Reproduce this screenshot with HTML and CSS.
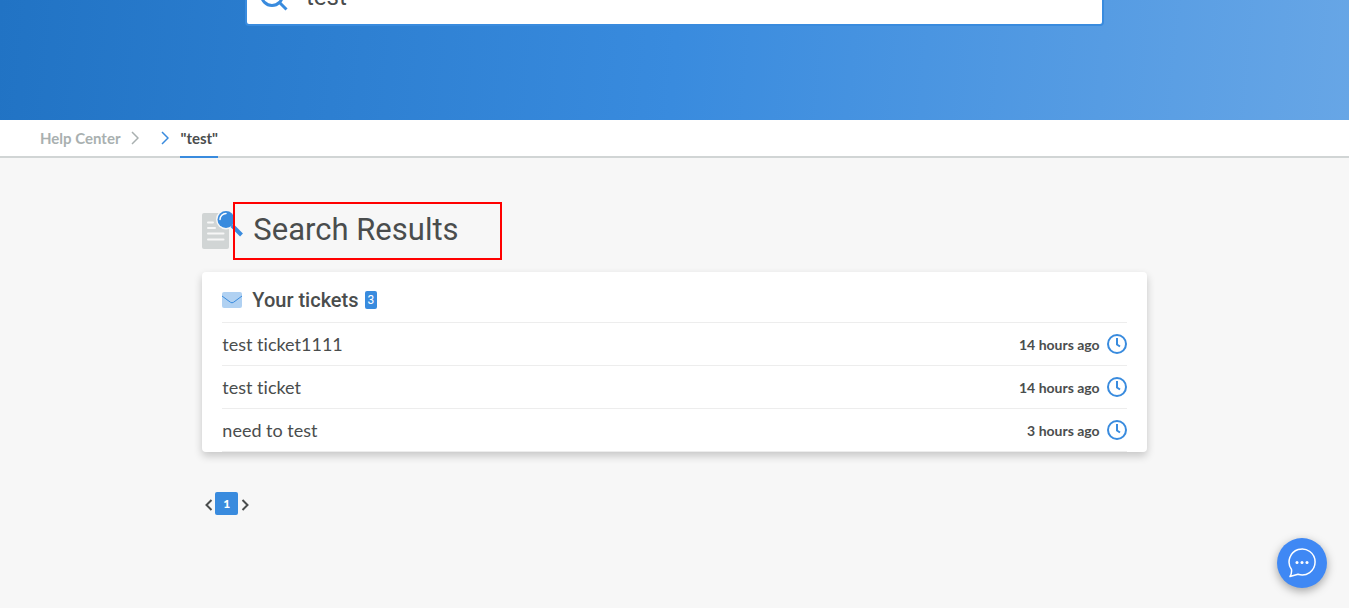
FILE: index.html
```html
<!DOCTYPE html>
<html lang="en">
<head>
<meta charset="utf-8">
<meta name="viewport" content="width=device-width, initial-scale=1">
<title>Search Results - Help Center</title>
<link rel="stylesheet" href="styles.css">
</head>
<body>
<header class="hero">
  <form class="search" role="search">
    <svg class="search-icon" viewBox="0 0 28 28" aria-hidden="true"><circle cx="12" cy="12" r="10.5"/><path d="M19.5 19.5 26.5 26.5"/></svg>
    <input class="search-input" type="text" value="test" aria-label="Search">
  </form>
</header>
<nav class="crumbs" aria-label="Breadcrumb">
  <a class="crumb" href="#">Help Center</a>
  <svg class="chevron" viewBox="0 0 8 14" aria-hidden="true"><path d="M1 1l6 6-6 6"/></svg>
  <svg class="chevron chevron-active" viewBox="0 0 8 14" aria-hidden="true"><path d="M1 1l6 6-6 6"/></svg>
  <a class="crumb crumb-current" href="#" aria-current="page">"test"</a>
</nav>
<main class="content">
  <div class="heading">
    <svg class="heading-icon" viewBox="0 0 42 40" aria-hidden="true">
      <rect x="0" y="2" width="27" height="36" rx="2" fill="#d1d5d5"/>
      <path d="M6 11.500h5M6 17h7M6 22.500h15.500M6 28.500h15.500" stroke="#f7f7f7" stroke-width="2" stroke-linecap="round"/>
      <circle cx="24" cy="8.500" r="10" fill="#f7f7f7"/>
      <path d="M30 14.500 39.500 24" stroke="#398bde" stroke-width="4"/>
      <circle cx="24" cy="8.500" r="8.500" fill="#398bde"/>
      <path d="M18 8.500a6 6 0 0 1 6-6" fill="none" stroke="#fff" stroke-width="1.500" stroke-linecap="round"/>
    </svg>
    <h1 class="title">Search Results</h1>
  </div>
  <section class="card">
    <h2 class="card-title">
      <svg class="mail" viewBox="0 0 20 16" aria-hidden="true"><rect width="20" height="16" rx="2" fill="#b0d1f2"/><path d="M0 4l8.500 6.300q1.500 1 3 0L20 4" fill="none" stroke="#398bde"/></svg>
      <span>Your tickets</span>
      <span class="count">3</span>
    </h2>
    <ul class="tickets">
      <li class="ticket"><a class="ticket-link" href="#">test ticket1111</a><span class="time">14 hours ago</span><svg class="clock" viewBox="0 0 20 20" aria-hidden="true"><circle cx="10" cy="10" r="9"/><path d="M10 4v6.500l3 2"/></svg></li>
      <li class="ticket"><a class="ticket-link" href="#">test ticket</a><span class="time">14 hours ago</span><svg class="clock" viewBox="0 0 20 20" aria-hidden="true"><circle cx="10" cy="10" r="9"/><path d="M10 4v6.500l3 2"/></svg></li>
      <li class="ticket"><a class="ticket-link" href="#">need to test</a><span class="time">3 hours ago</span><svg class="clock" viewBox="0 0 20 20" aria-hidden="true"><circle cx="10" cy="10" r="9"/><path d="M10 4v6.500l3 2"/></svg></li>
    </ul>
  </section>
  <nav class="pager" aria-label="Pagination">
    <a class="pager-arrow" href="#" aria-label="Previous"><svg class="arrow" viewBox="0 0 8 12" aria-hidden="true"><path d="M6.500 1l-5 5 5 5"/></svg></a>
    <a class="page" href="#" aria-current="page">1</a>
    <a class="pager-arrow" href="#" aria-label="Next"><svg class="arrow" viewBox="0 0 8 12" aria-hidden="true"><path d="M1.500 1l5 5-5 5"/></svg></a>
  </nav>
</main>
<button class="chat" type="button" aria-label="Open chat">
  <svg class="chat-icon" viewBox="0 0 28 30" aria-hidden="true"><path d="M3.500 21.500A13 13 0 1 1 10 26.300L2 28.500Q4 25.500 3.500 21.500Z" fill="none" stroke="#fff" stroke-width="1.500" stroke-linejoin="round"/><circle cx="9" cy="14.500" r="1.500" fill="#fff"/><circle cx="14" cy="14.500" r="1.500" fill="#fff"/><circle cx="19" cy="14.500" r="1.500" fill="#fff"/></svg>
</button>
</body>
</html>
```
FILE: styles.css
```css
* { box-sizing: border-box; }

body {
  margin: 0;
  background: #f7f7f7;
  color: #4a4d4d;
  font-family: Lato, "Liberation Sans", sans-serif;
  font-variant-ligatures: none;
}

a { color: inherit; text-decoration: none; }
svg { display: block; flex: none; }

.hero {
  display: flow-root;
  padding: 0 20px 94px;
  background: linear-gradient(95deg, #2173c4 0%, #398bde 50%, #67a6e6 100%);
}

.search {
  display: flex;
  align-items: center;
  gap: 18px;
  max-width: 859px;
  height: 58px;
  margin: -32px auto 0;
  padding: 0 13px;
  background: #fff;
  border: 2px solid #398bde;
  border-radius: 4px;
}

.search-icon {
  width: 28px;
  height: 28px;
  fill: none;
  stroke: #398bde;
  stroke-width: 3;
}

.search-input {
  flex: 1;
  min-width: 0;
  padding: 0;
  border: 0;
  outline: 0;
  background: none;
  color: #4a4d4d;
  font: 24px Roboto, sans-serif;
}

.crumbs {
  display: flex;
  align-items: center;
  height: 38px;
  padding-left: 40px;
  background: #fff;
  border-bottom: 2px solid #d1d5d5;
  font-size: 15px;
  font-weight: 700;
}

.crumb { color: #a9b0b0; }

.crumb-current {
  align-self: stretch;
  margin-bottom: -2px;
  border-bottom: 2px solid #398bde;
  color: #4a4d4d;
  line-height: 36px;
}

.chevron {
  width: 8px;
  height: 14px;
  margin: 0 11px;
  fill: none;
  stroke: #a9b0b0;
  stroke-width: 1.5;
}

.chevron-active { stroke: #398bde; }

.content {
  width: 70%;
  margin: 0 auto;
  padding: 44px 0 48px;
}

.heading {
  display: flex;
  align-items: center;
  margin-bottom: 12px;
}

.heading-icon {
  width: 42px;
  height: 40px;
  margin-right: -11px;
}

.title {
  width: 269px;
  margin: 0;
  padding: 0 18px 2px;
  border: 2px solid #f00;
  font: 400 31px/52px Roboto, sans-serif;
  white-space: nowrap;
}

.card {
  padding: 0 20px;
  background: #fff;
  border-radius: 4px;
  box-shadow: 0 4px 8px rgba(0, 0, 0, 0.2);
}

.card-title {
  display: flex;
  align-items: center;
  height: 50px;
  margin: 0;
  padding-top: 5px;
  font: 500 20px Roboto, sans-serif;
}

.mail {
  width: 20px;
  height: 16px;
  margin-right: 10px;
}

.count {
  margin-left: 6px;
  padding: 0 3px;
  border-radius: 2px;
  background: #398bde;
  color: #fff;
  font: 400 12px/18px Roboto, sans-serif;
}

.tickets {
  margin: 0;
  padding: 0;
  list-style: none;
  border-bottom: 1px solid #ededed;
}

.ticket {
  display: flex;
  align-items: center;
  height: 43px;
  border-top: 1px solid #ededed;
}

.ticket-link {
  flex: 1;
  font-size: 18px;
}

.time {
  font-size: 14px;
  font-weight: 700;
}

.clock {
  width: 20px;
  height: 20px;
  margin-left: 7px;
  fill: none;
  stroke: #398bde;
  stroke-width: 2;
}

.pager {
  display: flex;
  align-items: center;
  gap: 2px;
  margin-top: 40px;
}

.pager-arrow { padding: 3px 0 0 1px; }

.pager-arrow:first-child { padding-left: 3px; }

.arrow {
  width: 8px;
  height: 12px;
  fill: none;
  stroke: #4a4d4d;
  stroke-width: 2;
}

.page {
  width: 23px;
  border-radius: 2px;
  background: #398bde;
  color: #fff;
  font-size: 12px;
  font-weight: 900;
  line-height: 23px;
  text-align: center;
}

.chat {
  position: fixed;
  right: 22px;
  bottom: 20px;
  display: grid;
  place-items: center;
  width: 50px;
  height: 50px;
  padding: 0;
  border: 0;
  border-radius: 50%;
  background: #3f88f4;
  box-shadow: 0 3px 10px rgba(0, 0, 0, 0.35);
  cursor: pointer;
}

.chat-icon {
  width: 28px;
  height: 30px;
}
```
